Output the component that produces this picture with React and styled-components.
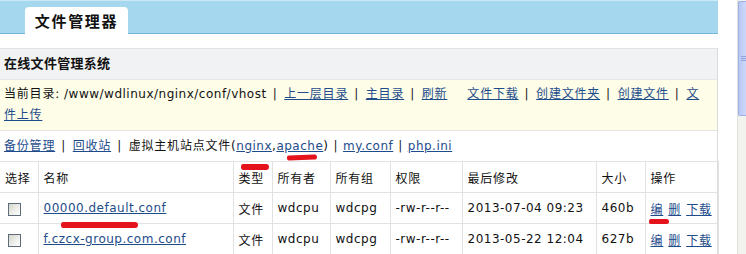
import React from "react";
import styled, { createGlobalStyle } from "styled-components";

const Global = createGlobalStyle`
  html, body { margin: 0; padding: 0; background: #fff; }
  body {
    font-family: "DejaVu Sans", "Noto Sans CJK SC", sans-serif;
    font-size: 12px;
    color: #111;
    letter-spacing: 0.5px;
  }
`;

const Frame = styled.div`
  display: flex;
  width: 746px;
  height: 254px;
  overflow: hidden;
`;

const Main = styled.div`
  width: 718px;
  flex: none;
`;

const Gutter = styled.div`
  flex: 1;
  display: flex;
  justify-content: flex-end;
`;

const ScrollTrack = styled.div`
  width: 8px;
  background: #f2f2ee;
  border-left: 1px solid #e2e2dc;
  display: flex;
  flex-direction: column;
`;

const Thumb = styled.div`
  height: 113px;
  margin-top: 1px;
  background: linear-gradient(90deg, #b9c8f4, #cdd8fa);
  border: 1px solid #9fb1e8;
  border-right: none;
  border-radius: 2px 0 0 2px;
  display: flex;
  flex-direction: column;
  align-items: flex-end;
  justify-content: center;
  gap: 1px;
`;

const Grip = styled.span`
  width: 5px;
  height: 1px;
  background: #8ea3e0;
`;

const Header = styled.div`
  height: 32px;
  background: #a5d7ee;
  border-top: 1px solid #cbe8f5;
  border-bottom: 1px solid #72b6d8;
  display: flex;
  align-items: flex-end;
  padding-left: 25px;
`;

const Tab = styled.div`
  width: 103px;
  height: 27px;
  margin-bottom: -1px;
  background: #fff;
  border-radius: 4px 4px 0 0;
  display: flex;
  align-items: center;
  justify-content: center;
  font-weight: bold;
  font-size: 15px;
  letter-spacing: 1.7px;
  color: #111;
`;

const Panel = styled.div`
  margin-top: 14px;
  border-right: 1px solid #dcdcdc;
`;

const SectionTitle = styled.div`
  height: 30px;
  line-height: 30px;
  padding-left: 4px;
  background: #f1f2f4;
  border-top: 1px solid #e2e3e5;
  border-bottom: 1px solid #e6e6e6;
  font-weight: bold;
  font-size: 13px;
  letter-spacing: 0.3px;
`;

const PathBar = styled.div`
  background: #fdfde8;
  padding: 4px 8px 4px 4px;
  line-height: 21px;
  border-bottom: 1px solid #e3e3e3;
`;

const LinksRow = styled.div`
  height: 30px;
  line-height: 30px;
  padding: 0 4px;
  white-space: nowrap;
`;

const Han = styled.span`
  letter-spacing: 0.8px;
`;

const Link = styled.a`
  position: relative;
  color: #1e4c8b;
  text-decoration: underline;
  cursor: pointer;
  margin-left: ${(p) => (p.$gap ? `${p.$gap}px` : "0")};
`;

const Sep = styled.span`
  margin: 0 ${(p) => (p.$tight ? 5 : 7)}px 0 ${(p) => (p.$tight ? 5 : 6)}px;
  color: #222;
`;

const Mark = styled.span`
  position: absolute;
  left: ${(p) => p.$x}px;
  top: ${(p) => p.$y}px;
  width: ${(p) => p.$w}px;
  height: ${(p) => p.$h || 5}px;
  background: #e5131b;
  border-radius: 3px 4px 4px 3px;
  transform: rotate(${(p) => p.$r || 0}deg);
  pointer-events: none;
`;

const Table = styled.table`
  width: 718px;
  border-collapse: collapse;
  table-layout: fixed;
  border-top: 1px solid #e2e2e2;
`;

const Cell = styled.td`
  height: 30px;
  padding: ${(p) => (p.$check ? "0 0 0 8px" : "0 5px")};
  border: 1px solid #e2e2e2;
  white-space: nowrap;
  overflow: visible;
  vertical-align: middle;
  &:first-child { border-left: none; }
`;

const Check = styled.span`
  display: block;
  width: 11px;
  height: 11px;
  margin-top: 2px;
  border: 1px solid #5e6b78;
  background: linear-gradient(135deg, #d6d6d0 0%, #eeeeea 55%, #ffffff 100%);
`;

const Ops = styled.span`
  display: inline-flex;
  gap: 5px;
`;

// wrap runs of CJK characters so they get their own tracking
const t = (s) =>
  s.split(/([\u3000-\u9fff\uff00-\uffef]+)/).map((part, i) =>
    i % 2 === 1 ? <Han key={i}>{part}</Han> : part
  );

const cols = [38, 195, 39, 58, 60, 72, 134, 49, 73];
const heads = ["选择", "名称", "类型", "所有者", "所有组", "权限", "最后修改", "大小", "操作"];

const rows = [
  { name: "00000.default.conf", mark: true, type: "文件", owner: "wdcpu", group: "wdcpg", perm: "-rw-r--r--", mtime: "2013-07-04 09:23", size: "460b" },
  { name: "f.czcx-group.com.conf", mark: false, type: "文件", owner: "wdcpu", group: "wdcpg", perm: "-rw-r--r--", mtime: "2013-05-22 12:04", size: "627b" },
];

export default function App() {
  return (
    <Frame>
      <Global />
      <Main>
        <Header>
          <Tab>文件管理器</Tab>
        </Header>
        <Panel>
          <SectionTitle>在线文件管理系统</SectionTitle>
          <PathBar>
            {t("当前目录: /www/wdlinux/nginx/conf/vhost")}<Sep>|</Sep>
            <Link>{t("上一层目录")}</Link><Sep>|</Sep>
            <Link>{t("主目录")}</Link><Sep>|</Sep>
            <Link>{t("刷新")}</Link>
            <Link $gap={20}>{t("文件下载")}</Link><Sep>|</Sep>
            <Link>{t("创建文件夹")}</Link><Sep>|</Sep>
            <Link>{t("创建文件")}</Link><Sep>|</Sep>
            <Link>{t("文件上传")}</Link>
          </PathBar>
          <LinksRow>
            <Link>{t("备份管理")}</Link><Sep>|</Sep>
            <Link>{t("回收站")}</Link><Sep>|</Sep>
            {t("虚拟主机站点文件(")}
            <Link>nginx<Mark $x={5} $y={25} $w={28} $h={6} /></Link>,
            <Link>apache<Mark $x={11} $y={16} $w={30} $r={-2} /></Link>)
            <Sep $tight>|</Sep>
            <Link>my.conf</Link><Sep $tight>|</Sep>
            <Link>php.ini</Link>
          </LinksRow>
          <Table>
            <colgroup>
              {cols.map((w, i) => (
                <col key={i} style={{ width: w }} />
              ))}
            </colgroup>
            <tbody>
              <tr>
                {heads.map((h) => (
                  <Cell key={h}>{t(h)}</Cell>
                ))}
              </tr>
              {rows.map((r) => (
                <tr key={r.name}>
                  <Cell $check>
                    <Check />
                  </Cell>
                  <Cell>
                    <Link>
                      {r.name}
                      {r.mark && <Mark $x={17} $y={21} $w={77} $h={6} />}
                    </Link>
                  </Cell>
                  <Cell>{t(r.type)}</Cell>
                  <Cell>{r.owner}</Cell>
                  <Cell>{r.group}</Cell>
                  <Cell>{r.perm}</Cell>
                  <Cell>{r.mtime}</Cell>
                  <Cell>{r.size}</Cell>
                  <Cell>
                    <Ops>
                      <Link>
                        {t("编")}
                        {r.mark && <Mark $x={-2} $y={19} $w={20} />}
                      </Link>
                      <Link>{t("删")}</Link>
                      <Link>{t("下载")}</Link>
                    </Ops>
                  </Cell>
                </tr>
              ))}
            </tbody>
          </Table>
        </Panel>
      </Main>
      <Gutter>
        <ScrollTrack>
          <Thumb>
            <Grip />
            <Grip />
            <Grip />
          </Thumb>
        </ScrollTrack>
      </Gutter>
    </Frame>
  );
}
